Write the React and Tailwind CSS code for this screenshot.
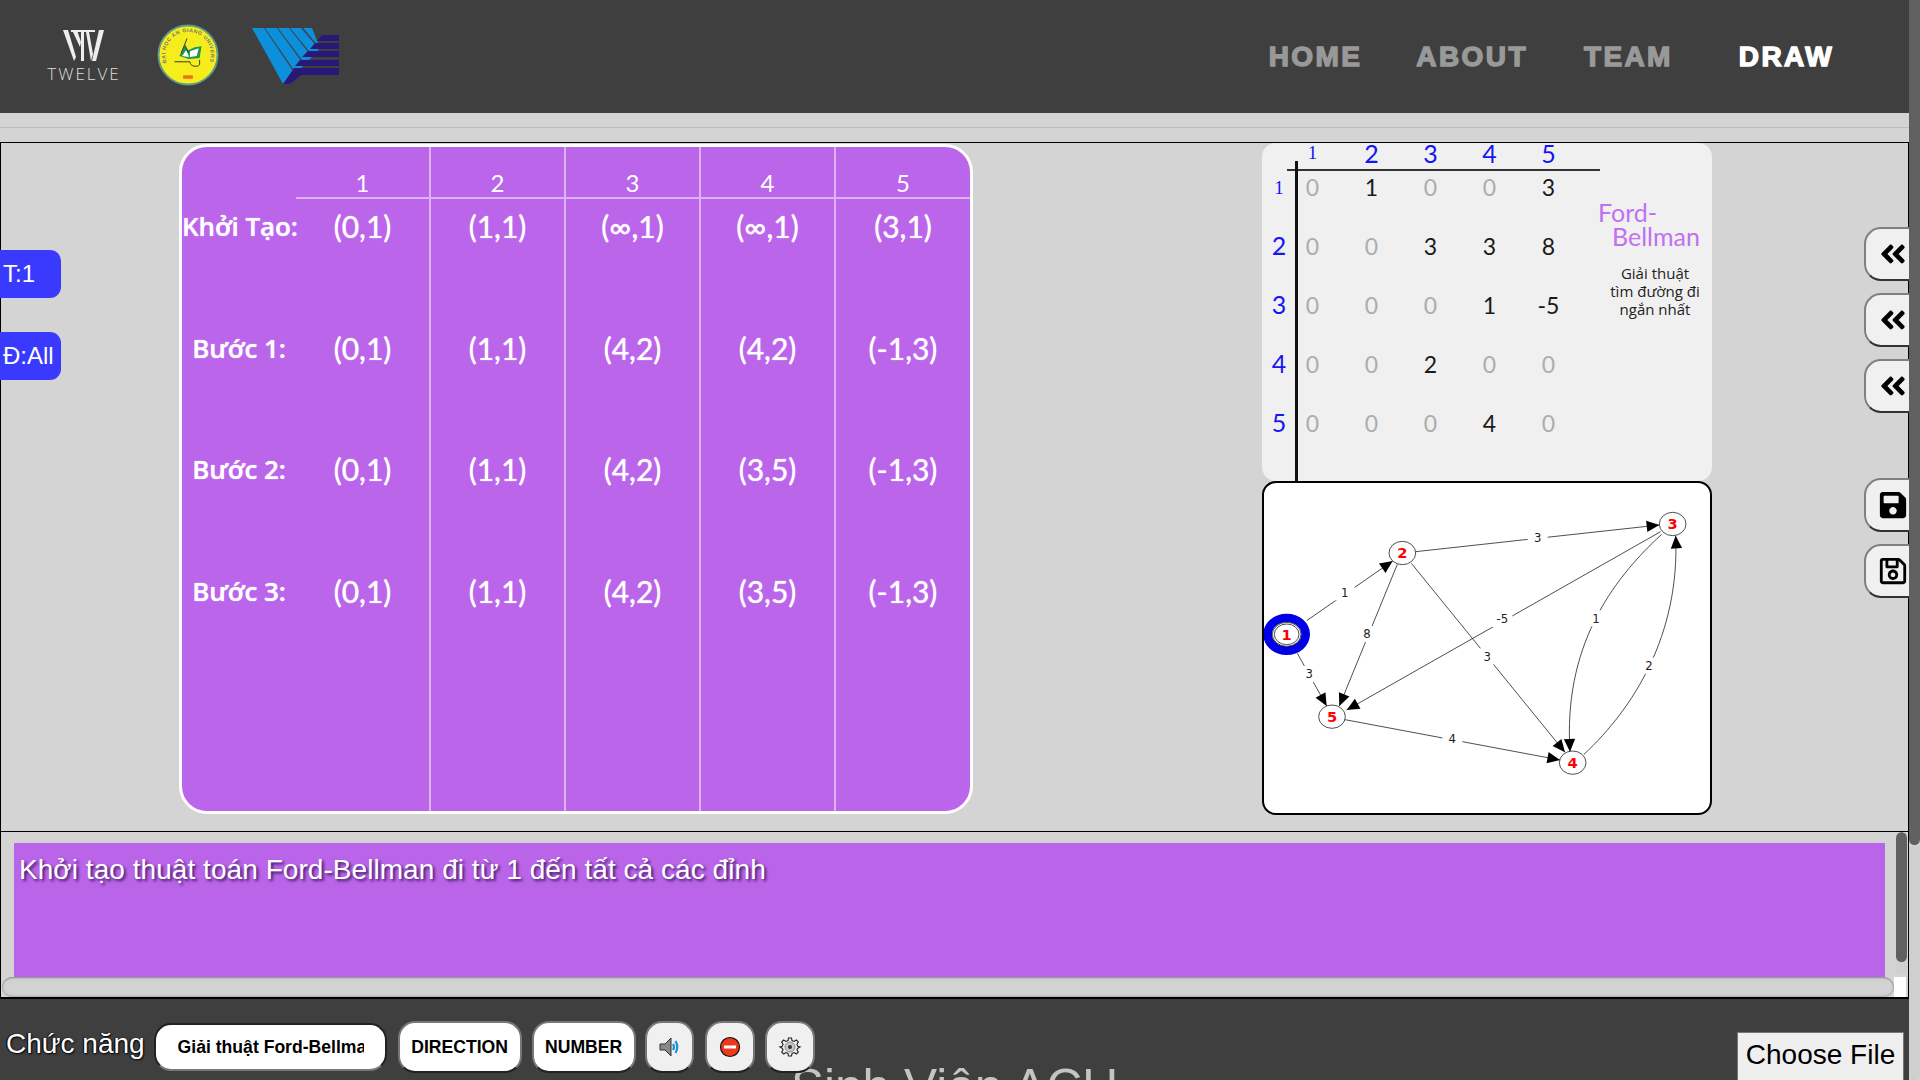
import React from "react";
import { FaAngleDoubleLeft, FaSave, FaRegSave } from "react-icons/fa";

const tableRows = [
  ["Khởi Tạo:", "(0,1)", "(1,1)", "(∞,1)", "(∞,1)", "(3,1)"],
  ["Bước 1:", "(0,1)", "(1,1)", "(4,2)", "(4,2)", "(-1,3)"],
  ["Bước 2:", "(0,1)", "(1,1)", "(4,2)", "(3,5)", "(-1,3)"],
  ["Bước 3:", "(0,1)", "(1,1)", "(4,2)", "(3,5)", "(-1,3)"],
];

const matrix = [
  [0, 1, 0, 0, 3],
  [0, 0, 3, 3, 8],
  [0, 0, 0, 1, -5],
  [0, 0, 2, 0, 0],
  [0, 0, 0, 4, 0],
];

// graph coords are 3x the page pixels, easier to read off the picture
const edges = [
  { from: [170, 437], to: [428, 258], label: "1", at: [284, 352] },
  { from: [142, 535], to: [230, 693], label: "3", at: [178, 597] },
  { from: [497, 230], to: [1228, 150], label: "3", at: [863, 187] },
  { from: [442, 268], to: [268, 693], label: "8", at: [351, 477] },
  { from: [484, 265], to: [945, 832], label: "3", at: [712, 544] },
  { from: [1232, 170], to: [290, 705], label: "-5", at: [757, 432] },
  { from: [285, 734], to: [930, 855], label: "4", at: [607, 791] },
  {
    to: [960, 830],
    d: "M1235 178 C1080 320 940 520 960 830",
    label: "1",
    at: [1038, 430],
    tail: [958, 780],
  },
  {
    to: [1277, 182],
    d: "M1002 838 C1150 700 1290 480 1277 182",
    label: "2",
    at: [1197, 572],
    tail: [1280, 232],
  },
];

const nodes = [
  { n: "2", x: 457, y: 234 },
  { n: "3", x: 1268, y: 147 },
  { n: "4", x: 968, y: 863 },
  { n: "5", x: 246, y: 725 },
];

function arrowHead(tip, tail) {
  const dx = tip[0] - tail[0];
  const dy = tip[1] - tail[1];
  const len = Math.hypot(dx, dy);
  const ux = dx / len;
  const uy = dy / len;
  const bx = tip[0] - ux * 38;
  const by = tip[1] - uy * 38;
  const w = 17;
  return `${tip[0]},${tip[1]} ${bx - uy * w},${by + ux * w} ${bx + uy * w},${by - ux * w}`;
}

const Graph = () => (
  <svg viewBox="43 24 1336 990" className="w-[446px] h-[330px] block">
    {edges.map((e, i) => (
      <g key={i}>
        {e.d ? (
          <path d={e.d} fill="none" stroke="#222" strokeWidth="2.4" />
        ) : (
          <line x1={e.from[0]} y1={e.from[1]} x2={e.to[0]} y2={e.to[1]} stroke="#222" strokeWidth="2.4" />
        )}
        <polygon points={arrowHead(e.to, e.tail || e.from)} fill="#000" />
        <rect x={e.at[0] - 30} y={e.at[1] - 24} width="60" height="48" fill="#fff" />
        <text
          x={e.at[0]}
          y={e.at[1] + 13}
          textAnchor="middle"
          fontSize="35"
          fill="#222"
          fontFamily="'DejaVu Sans', sans-serif"
        >
          {e.label}
        </text>
      </g>
    ))}
    <ellipse cx="110" cy="478" rx="57" ry="49" fill="#fff" stroke="#0000e6" strokeWidth="26" />
    <ellipse cx="110" cy="478" rx="43" ry="36" fill="#fff" stroke="#222" strokeWidth="2.4" />
    <ellipse cx="110" cy="478" rx="37" ry="31" fill="#fff" stroke="#222" strokeWidth="2.4" />
    <text x="110" y="494" textAnchor="middle" fontSize="44" fontWeight="700" fill="#f00" fontFamily="'DejaVu Sans', sans-serif">
      1
    </text>
    {nodes.map((d) => (
      <g key={d.n}>
        <ellipse cx={d.x} cy={d.y} rx="40" ry="35" fill="#fff" stroke="#222" strokeWidth="2.4" />
        <text x={d.x} y={d.y + 16} textAnchor="middle" fontSize="44" fontWeight="700" fill="#f00" fontFamily="'DejaVu Sans', sans-serif">
          {d.n}
        </text>
      </g>
    ))}
  </svg>
);

const TwelveLogo = () => (
  <div className="flex flex-col items-center w-[76px]">
    <svg viewBox="0 0 42 32" className="w-[42px] h-[32px]">
      <polygon points="0,0 5,0 13,27 11,31" fill="#eee" />
      <polygon points="9,0 14,0 18,12 17,17" fill="#eee" />
      <polygon points="8,0 32,0 32,2 8,2" fill="#eee" />
      <polygon points="18,2 21,2 21,31 18,31" fill="#eee" />
      <polygon points="23,2 26,2 30,24 28,31" fill="#eee" />
      <polygon points="36,0 41,0 33,31 29,31" fill="#eee" />
    </svg>
    <span className="font-['Open_Sans'] font-light text-[17px] leading-[17px] tracking-[2px] text-[#ddd] mt-[3px] whitespace-nowrap">
      TWELVE
    </span>
  </div>
);

const SchoolLogo = () => (
  <svg viewBox="0 0 64 64" className="w-[62px] h-[62px]">
    <circle cx="32" cy="32" r="30.5" fill="#f6ee1c" stroke="#5f9a8a" strokeWidth="2" />
    <defs>
      <path id="ring" d="M10 40 A23.5 23.5 0 1 1 54 40" />
    </defs>
    <text fontSize="5.4" fontWeight="700" fill="#777" fontFamily="'Liberation Sans', sans-serif" letterSpacing="0.55">
      <textPath href="#ring">ĐẠI HỌC AN GIANG UNIVERSITY</textPath>
    </text>
    <rect x="27" y="53" width="10" height="3.5" fill="#f26b21" />
    <polygon points="23,33 29,21 32,27 39,24 46,23 44,35 33,36" fill="#1d9a50" />
    <polygon points="26,33 30,27 32,31 33,34" fill="#fff" />
    <polygon points="34,28 43,25 41,33 34,34" fill="#fff" />
    <path d="M31 15 L25 30 M29 23 L33 30" stroke="#333" strokeWidth="1" fill="none" />
    <path d="M18 39 H34 C34 44 42 45 44 42 V37" stroke="#333" strokeWidth="1" fill="none" />
  </svg>
);

const BlueVLogo = () => (
  <svg viewBox="252 29 88 57" className="w-[88px] h-[57px]">
    <polygon points="252,29 264,29 295,75 283,85" fill="#0d90dc" />
    <polygon points="265,29 277,29 304,66 296,74" fill="#0d90dc" />
    <polygon points="278,29 289,29 312,58 305,65" fill="#0d90dc" />
    <polygon points="290,29 301,29 319,50 313,57" fill="#0d90dc" />
    <polygon points="303,29 312,29 318,44 319,48" fill="#0d90dc" />
    <polygon points="322,36 339,36 339,42 317,42" fill="#2a1878" />
    <polygon points="315,44 339,44 339,50 310,50" fill="#2a1878" />
    <polygon points="308,52 339,52 339,58 302,58" fill="#2a1878" />
    <polygon points="300,61 339,61 339,67 295,67" fill="#2a1878" />
    <polygon points="294,69 339,69 339,76 301,76 290,85 283,85" fill="#2a1878" />
  </svg>
);

const SpeakerIcon = () => (
  <svg viewBox="0 0 24 24" className="w-[24px] h-[24px]">
    <path d="M3 9 H8 L14 3 V21 L8 15 H3 Z" fill="#8a8a8a" stroke="#333" strokeWidth="1" />
    <path d="M16 9 Q18 12 16 15 M18.5 6 Q22 12 18.5 18" stroke="#1591d8" strokeWidth="2.2" fill="none" />
  </svg>
);

const NoEntryIcon = () => (
  <svg viewBox="0 0 24 24" className="w-[24px] h-[24px]">
    <circle cx="12" cy="12" r="9.5" fill="#ee3a1a" stroke="#111" strokeWidth="1.2" />
    <rect x="6" y="10.5" width="12" height="3" fill="#fff" />
  </svg>
);

const GearIcon = () => (
  <svg viewBox="0 0 24 24" className="w-[24px] h-[24px]">
    <path
      d="M10.5 3 H13.5 L14 5.6 L16.2 6.5 L18.4 5 L20.4 7 L18.9 9.2 L19.8 11.4 L22 12 L19.8 13.2 L18.9 15 L20.4 17 L18.4 19 L16.2 17.5 L14 18.4 L13.5 21 H10.5 L10 18.4 L7.8 17.5 L5.6 19 L3.6 17 L5.1 15 L4.2 13.2 L2 12 L4.2 11.4 L5.1 9.2 L3.6 7 L5.6 5 L7.8 6.5 L10 5.6 Z"
      fill="#f0f0f0"
      stroke="#222"
      strokeWidth="1.1"
    />
    <circle cx="12" cy="12" r="5" fill="#c8c8c8" stroke="#777" strokeWidth="0.8" />
    <circle cx="12" cy="12" r="2" fill="#333" />
  </svg>
);

const Header = () => (
  <header className="h-[113px] bg-[#3f3f3f] flex items-center">
    <div className="flex items-start ml-[46px] mt-[3px]">
      <div>
        <TwelveLogo />
      </div>
      <div className="ml-[35px] -mt-[6px]">
        <SchoolLogo />
      </div>
      <div className="ml-[33px] -mt-[2px]">
        <BlueVLogo />
      </div>
    </div>
    <nav className="flex ml-auto mr-[75px] font-['Liberation_Sans'] font-bold text-[28px] leading-[32px] tracking-[2.4px] text-[#999] [-webkit-text-stroke:1.4px]">
      <a>HOME</a>
      <a className="ml-[54px]">ABOUT</a>
      <a className="ml-[56px]">TEAM</a>
      <a className="ml-[66px] text-white">DRAW</a>
    </nav>
  </header>
);

const SolutionTable = () => (
  <div className="w-[794px] h-[670px] mt-px border-[3px] border-white rounded-[28px] bg-[#bb65eb] text-white flex overflow-hidden">
    <div className="w-[114px] shrink-0">
      <div className="h-[52px]"></div>
      {tableRows.map((row) => (
        <div
          key={row[0]}
          className="h-[121.5px] leading-[54px] text-center font-['Open_Sans'] font-semibold text-[26px] tracking-[-0.1px] [text-shadow:0_0_1px_white] whitespace-nowrap"
        >
          {row[0]}
        </div>
      ))}
    </div>
    {[1, 2, 3, 4, 5].map((col) => (
      <div
        key={col}
        className={`shrink-0 text-center font-['Lato'] ${col < 5 ? "w-[135px] border-r-2 border-white/50" : "flex-1"}`}
      >
        <div className="h-[52px] pt-[21px] border-b-2 border-white/50 text-[24px] leading-[30px]">{col}</div>
        {tableRows.map((row) => (
          <div key={row[0]} className="h-[121.5px] leading-[54px] text-[30px] [text-shadow:0_0_1px_white]">
            {row[col]}
          </div>
        ))}
      </div>
    ))}
  </div>
);

const Matrix = () => (
  <div className="h-[338px] bg-[#f0f0f0] rounded-[14px] flex relative overflow-hidden font-['Lato']">
    <div className="absolute left-[25px] top-[26px] w-[313px] h-[2px] bg-[#333]"></div>
    <div className="absolute left-[33px] top-[18px] bottom-0 w-[3px] bg-[#111]"></div>
    <div className="w-[316px] shrink-0 grid grid-cols-[21px_repeat(5,59px)] grid-rows-[14.5px_repeat(5,59px)] content-start text-[23px] text-center">
      <div></div>
      {[1, 2, 3, 4, 5].map((n) => (
        <div key={n} className={`pt-[6px] text-[#1515f5] flex items-center justify-center ${n === 1 ? "text-[19px] font-['Liberation_Serif']" : "text-[25px]"}`}>
          {n}
        </div>
      ))}
      {matrix.map((row, i) => (
        <React.Fragment key={i}>
          <div className={`w-[34px] text-[#1515f5] flex items-center justify-center ${i === 0 ? "text-[19px] font-['Liberation_Serif'] pt-[3px]" : "text-[25px]"}`}>
            {i + 1}
          </div>
          {row.map((v, j) => (
            <div key={j} className={`flex items-center justify-center ${v === 0 ? "text-[#adadad]" : "text-[#1a1a1a]"}`}>
              {v}
            </div>
          ))}
        </React.Fragment>
      ))}
    </div>
    <div className="ml-[20px] pt-[57px] w-[110px]">
      <div className="text-[#c070f0] text-[25px] leading-[24px]">
        Ford-
        <br />
        <span className="ml-[14px]">Bellman</span>
      </div>
      <div className="mt-[16px] ml-[4px] text-[15px] leading-[18px] text-center text-[#222] font-['Open_Sans'] whitespace-nowrap">
        Giải thuật
        <br />
        tìm đường đi
        <br />
        ngắn nhất
      </div>
    </div>
  </div>
);

const SideButton = ({ children, className }) => (
  <button className={`w-[45px] h-[54px] -mr-px flex items-center pl-[12px] bg-[#f0f0f0] rounded-l-[17px] border-2 border-r-0 border-t-[#808080] border-l-[#808080] border-b-[#333] overflow-hidden ${className || ""}`}>
    {children}
  </button>
);

const App = () => {
  return (
    <div className="h-screen overflow-hidden flex bg-[#d4d4d4] font-['Liberation_Sans']">
      <div className="w-[1909px] shrink-0 flex flex-col">
        <Header />
        <div className="h-[29px] pt-[14px]">
          <div className="h-px bg-[#bdbdbd]"></div>
        </div>

        <main className="h-[689px] border border-b-0 border-black flex">
          <div className="w-[178px] shrink-0 pt-[107px] flex flex-col gap-[34px]">
            <div className="w-[61px] h-[48px] -ml-px pl-[3px] bg-[#3a3aff] rounded-r-[11px] text-white text-[24px] leading-[48px]">T:1</div>
            <div className="w-[61px] h-[48px] -ml-px pl-[3px] bg-[#3a3aff] rounded-r-[11px] text-white text-[24px] leading-[48px] whitespace-nowrap">Đ:All</div>
          </div>
          <SolutionTable />
          <div className="ml-[289px] w-[450px] shrink-0">
            <Matrix />
            <div className="h-[334px] border-2 border-black rounded-[14px] bg-white overflow-hidden">
              <Graph />
            </div>
          </div>
          <div className="flex-1 flex flex-col items-end pt-[84px]">
            <SideButton><FaAngleDoubleLeft size={30} /></SideButton>
            <SideButton className="mt-[12px]"><FaAngleDoubleLeft size={30} /></SideButton>
            <SideButton className="mt-[12px]"><FaAngleDoubleLeft size={30} /></SideButton>
            <SideButton className="mt-[65px]"><FaSave size={30} /></SideButton>
            <SideButton className="mt-[12px]"><FaRegSave size={30} /></SideButton>
          </div>
        </main>

        <section className="h-[168px] border-t border-x border-b-2 border-black flex flex-col">
          <div className="h-[145px] flex">
            <div className="ml-[13px] mt-[11px] w-[1871px] h-[134px] bg-[#ba64ea] pl-[5px] pt-[10px] text-white text-[28px] leading-[34px] tracking-[0.05px] [text-shadow:2px_2px_3px_#3c1a60]">
              Khởi tạo thuật toán Ford-Bellman đi từ 1 đến tất cả các đỉnh
            </div>
            <div className="ml-[11px] w-[11px] h-[143px] bg-[#d0d0d0] rounded-full overflow-hidden">
              <div className="h-[130px] bg-[#606060] rounded-full"></div>
            </div>
          </div>
          <div className="h-[20px] flex">
            <div className="ml-px w-[1892px] bg-[#d2d2d2] rounded-full shadow-[inset_0_1px_2px_#888,inset_0_-1px_2px_#aaa]"></div>
            <div className="w-[12px] bg-white"></div>
          </div>
        </section>

        <footer className="flex-1 min-h-0 bg-[#3f3f3f] pt-[22px]">
          <div className="relative z-10 h-[52px] flex items-start pl-[6px] pr-[5px] text-black font-bold text-[17.6px]">
            <span className="-mt-[1px] font-normal text-[28px] leading-[48px] text-white [text-shadow:1px_1px_2px_black,-1px_0_1px_black] whitespace-nowrap">Chức năng</span>
            <div className="ml-[9px] mt-[2px] w-[233px] h-[48px] bg-white rounded-[17px] border-2 border-[#222] border-b-[#777] overflow-hidden pl-[22px] pr-[21px] leading-[44px] whitespace-nowrap">
              <div className="overflow-hidden">Giải thuật Ford-Bellman</div>
            </div>
            <button className="ml-[11px] w-[124px] h-[52px] bg-white rounded-[17px] border-2 border-[#777] border-b-[#222]">DIRECTION</button>
            <button className="ml-[10px] w-[104px] h-[52px] bg-white rounded-[17px] border-2 border-[#777] border-b-[#222]">NUMBER</button>
            <button className="ml-[9px] w-[49px] h-[52px] bg-[#f0f0f0] rounded-[17px] border-2 border-[#777] border-b-[#222] flex items-center justify-center"><SpeakerIcon /></button>
            <button className="ml-[11px] w-[50px] h-[52px] bg-[#f0f0f0] rounded-[17px] border-2 border-[#777] border-b-[#222] flex items-center justify-center"><NoEntryIcon /></button>
            <button className="ml-[10px] w-[50px] h-[52px] bg-[#f0f0f0] rounded-[17px] border-2 border-[#777] border-b-[#222] flex items-center justify-center"><GearIcon /></button>
            <button className="ml-auto mt-[11px] w-[167px] h-[52px] pb-[6px] bg-[#efefef] border border-[#767676] font-normal text-[28px] text-black">Choose File</button>
          </div>
          <div className="-mt-[13px] text-center text-[49.6px] leading-[55px] text-[#c4c4c4]">Sinh Viên ACU</div>
        </footer>
      </div>

      <div className="w-[11px] shrink-0 flex flex-col">
        <div className="h-[845px] bg-[#606060] rounded-b-full"></div>
        <div className="flex-1 bg-[#cfcfcf] rounded-full"></div>
      </div>
    </div>
  );
};

export default App;
